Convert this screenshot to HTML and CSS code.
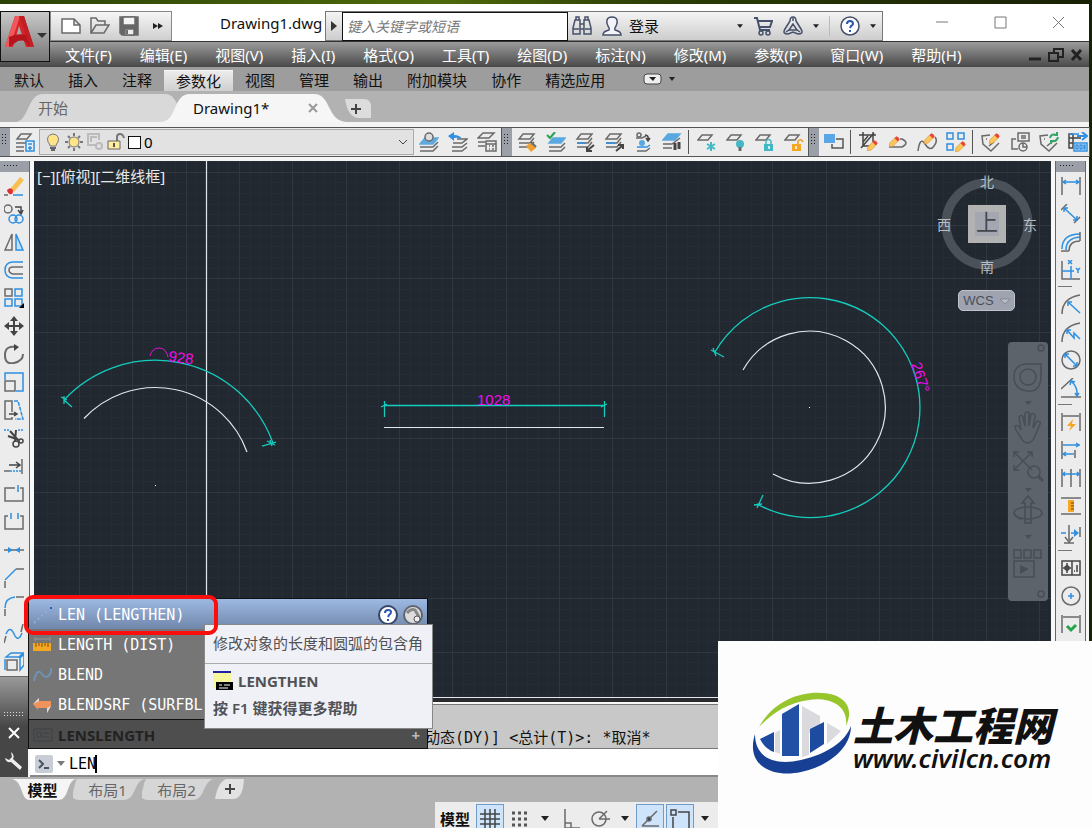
FILE: index.html
```html
<!DOCTYPE html>
<html lang="zh-CN">
<head>
  <meta charset="UTF-8">
  <meta name="viewport" content="width=device-width, initial-scale=1.0">
  <title>Drawing1.dwg</title>
  <link rel="stylesheet" href="styles.css">
</head>
<body>
  <!-- Shared icon parts -->
  <svg class="defs" width="0" height="0" aria-hidden="true">
    <symbol id="stack" viewBox="0 0 20 20"><path d="M6 2h11l-4 5H2zM2 11h11l4-5M2 15h11l4-5"/></symbol>
    <symbol id="sheet" viewBox="0 0 20 20"><path d="M5 3h10l-4 5H1z"/></symbol>
    <symbol id="pencil" viewBox="0 0 20 20"><path d="M2 18l1-6 8-8 5 5-8 8z" fill="#fbc65a" stroke="#d9963a" stroke-width="1"/><path d="M10 5l3-3q4 1 5 5l-3 3z" fill="#e8463c" stroke="none"/></symbol>
    <symbol id="caret" viewBox="0 0 8 5"><path d="M0 0h8L4 5z" fill="#222" stroke="none"/></symbol>
  </svg>

  <div class="window">
    <!-- Title bar -->
    <header class="titlebar">
      <button class="app-button" aria-label="应用程序菜单">
        <svg width="50" height="50" viewBox="0 0 50 50"><path d="M5 35L15 4h9l10 31h-8l-7-21-6 21z" fill="#d8232a"/><path d="M15 4l5 0L10 35H5z" fill="#f0585a"/><path d="M9 25q9 -5 21-1l3 9-5 1q-2-7-10-5l-9 6z" fill="#b5161e"/><path d="M24 4l10 31-5-3L19 4z" fill="#c01f26"/><path d="M37 21h10l-5 5z" fill="#333"/></svg>
      </button>
      <div class="quick-access">
        <button aria-label="新建"><svg class="ico" viewBox="0 0 20 20"><path d="M1 3h12l6 6v8H1zM13 3v6h6" fill="#fff"/></svg></button>
        <button aria-label="打开"><svg class="ico" viewBox="0 0 20 20"><path d="M1 17V2h5l2 3h7v4M1 17L6 9h13l-5 8z"/></svg></button>
        <button aria-label="保存"><svg class="ico" viewBox="0 0 20 20"><path d="M1 1h18v18H3l-2-2z" fill="#666"/><path d="M4 1h12v8H4z" fill="#f4f4f4"/><path d="M6 13h9v6H6z" fill="#eee"/><path d="M8 14v4" stroke-width="2"/></svg></button>
        <button aria-label="更多"><svg class="ico" viewBox="0 0 20 20"><path d="M5 7l5 3-5 3zM10 7l5 3-5 3z" fill="#222" stroke="none"/></svg></button>
      </div>
      <h1 class="doc-title">Drawing1.dwg</h1>
      <div class="info-center">
        <button class="info-arrow" aria-label="展开"><svg width="6" height="10"><path d="M0 0l6 5-6 5z" fill="#333"/></svg></button>
        <input class="search" type="text" placeholder="键入关键字或短语" aria-label="搜索">
        <button aria-label="查找"><svg class="ico navy" viewBox="0 0 20 20"><path d="M1 12L3 4h5v14H1zM12 4h5l2 8v6h-7zM8 8h4v5H8zM4 4V1h3v3M13 4V1h3v3M1 13h6M13 13h6"/></svg></button>
        <button class="sign-in"><svg class="ico navy" viewBox="0 0 20 20"><path d="M10 1c-6 0-6 5-4 9 1 2 2 2 1 4-3 1-6 1-6 5h18c0-4-3-4-6-5-1-2 0-2 1-4 2-4 2-9-4-9z" fill="#f4f4f8"/></svg>登录</button>
        <svg class="push" width="6" height="4"><use href="#caret"/></svg>
        <button aria-label="购物车"><svg class="ico navy" viewBox="0 0 20 20"><path d="M1 2h3l3 12h10M5 5h14l-2 6H6" stroke-width="2"/><circle cx="8" cy="17" r="2"/><circle cx="15" cy="17" r="2"/></svg></button>
        <button aria-label="应用中心"><svg class="ico navy" viewBox="0 0 20 20"><path d="M7 5q0-4 3-4t3 4l5 8q3 5-3 5l-5-2-5 2q-6 0-3-5zM10 8l-4 6h8z"/><path d="M10 2v3M3 16l3-2M17 16l-3-2"/></svg></button>
        <svg width="6" height="4"><use href="#caret"/></svg>
        <span class="info-sep"></span>
        <button aria-label="帮助"><svg class="ico navy" viewBox="0 0 20 20"><circle cx="10" cy="10" r="9" fill="#fff"/><path d="M7 8q0-3 3-3t3 3q0 1-2 2l-1 2M10 14v2" stroke="#2a55b0" stroke-width="2"/></svg></button>
        <svg width="6" height="4"><use href="#caret"/></svg>
      </div>
      <div class="window-controls">
        <button aria-label="最小化"><svg width="12" height="12"><path d="M0 6h12"/></svg></button>
        <button aria-label="最大化"><svg width="13" height="13"><path d="M1 1h11v11H1z"/></svg></button>
        <button aria-label="关闭"><svg width="13" height="13"><path d="M1 1l11 11M12 1L1 12"/></svg></button>
      </div>
    </header>

    <!-- Menu bar -->
    <nav class="menubar">
      <button>文件(F)</button>
      <button>编辑(E)</button>
      <button>视图(V)</button>
      <button>插入(I)</button>
      <button>格式(O)</button>
      <button>工具(T)</button>
      <button>绘图(D)</button>
      <button>标注(N)</button>
      <button>修改(M)</button>
      <button>参数(P)</button>
      <button>窗口(W)</button>
      <button>帮助(H)</button>
      <div class="doc-controls">
        <svg width="54" height="14" viewBox="0 0 54 14"><path d="M0 11h12" stroke="#222" stroke-width="3"/><path d="M20 5h9v8h-9zM25 5V1h9v8h-5" fill="none" stroke="#222" stroke-width="2"/><path d="M43 2l9 10M52 2l-9 10" stroke="#222" stroke-width="3"/></svg>
      </div>
    </nav>

    <!-- Ribbon tabs -->
    <nav class="ribbon">
      <button>默认</button>
      <button>插入</button>
      <button>注释</button>
      <button class="active">参数化</button>
      <button>视图</button>
      <button>管理</button>
      <button>输出</button>
      <button>附加模块</button>
      <button>协作</button>
      <button>精选应用</button>
      <svg class="ribbon-toggle" width="32" height="12" viewBox="0 0 32 12"><rect x="1" y="1" width="17" height="10" rx="3" fill="#eee" stroke="#444"/><path d="M6 4h7l-3 4zM26 4h6l-3 4z" fill="#222"/></svg>
    </nav>

    <!-- Drawing tabs -->
    <nav class="file-tabs">
      <button class="file-tab start">
        <svg class="tab-shape" width="175" height="29" viewBox="0 0 175 29"><path d="M0 29C14 29 12 1 28 1H150C166 1 162 29 175 29z" fill="#d9d9d9"/></svg>
        <span>开始</span>
      </button>
      <button class="file-tab current">
        <svg class="tab-shape" width="188" height="29" viewBox="0 0 188 29"><path d="M0 29C18 29 12 1 30 1H154C172 1 166 29 188 29z" fill="#f6f6f6"/></svg>
        <span>Drawing1*</span>
        <svg class="tab-close" width="10" height="10"><path d="M1 1l8 8M9 1L1 9" stroke="#999" stroke-width="2"/></svg>
      </button>
      <button class="add-tab" aria-label="新图形"><svg width="28" height="22" viewBox="0 0 28 22"><path d="M1 2h19q7 0 7 8v11H15Q4 21 1 2z" fill="#dcdcdc"/><path d="M7 12h10M12 7v10" stroke="#444" stroke-width="2"/></svg></button>
    </nav>

    <!-- Layer toolbars -->
    <div class="toolbars">
      <div class="toolbar">
        <span class="grip"></span>
        <button aria-label="图层特性"><svg class="ico" viewBox="0 0 20 20"><path d="M6 2h10l-4 5H2zM1 11h10M1 15h8M1 19h8"/><path class="b" d="M11 9h8v10h-8zM13 12h4M13 16h4M15 14v4"/></svg></button>
        <div class="layer-combo">
          <svg width="18" height="20" viewBox="0 0 18 20"><path d="M6 14q0-2-2-4-2-7 5-8 7 1 5 8-2 2-2 4z" fill="#ffe48a" stroke="#777"/><path d="M6 16h6M7 18h4" stroke="#666" stroke-width="2"/></svg>
          <svg width="18" height="20" viewBox="0 0 18 20"><circle cx="9" cy="10" r="5" fill="#ffe48a" stroke="#777"/><path d="M9 1v3M9 16v3M0 10h3M15 10h3M3 4l2 2M13 14l2 2M15 4l-2 2M5 14l-2 2" stroke="#777" stroke-width="2"/></svg>
          <svg width="18" height="20" viewBox="0 0 18 20"><path d="M10 13H2V2h11v6M5 10V5h6" stroke="#bbb" stroke-width="2" fill="none"/><circle cx="13" cy="14" r="3" fill="none" stroke="#bbb" stroke-width="2"/></svg>
          <svg width="18" height="20" viewBox="0 0 18 20"><path d="M10 9V5q0-3 3-3t4 4" fill="none" stroke="#777" stroke-width="2"/><path d="M1 9h12v8H1z" fill="#ffeda0" stroke="#666"/><path d="M7 11v4" stroke="#555" stroke-width="2"/></svg>
          <span class="swatch"></span>
          <select class="layer-select" aria-label="图层"><option>0</option></select>
          <svg width="10" height="6"><path d="M1 1l4 4 4-4" fill="none" stroke="#444"/></svg>
        </div>
        <button aria-label="置为当前"><svg class="ico" viewBox="0 0 20 20"><path d="M6 6h13l-5 6H1z" fill="#5fa9df" stroke="#5fa9df"/><circle cx="10" cy="5" r="4" fill="#ddd"/><path d="M1 15h13l5-5M1 19h13l5-5"/></svg></button>
        <button aria-label="上一个图层"><svg class="ico" viewBox="0 0 20 20"><path d="M9 7h10l-5 4H5M4 15h10l5-4M4 19h10l5-4"/><path d="M0 4l6-4v3q6 0 8 4-5-2-8-1v3z" fill="#2f8fe0" stroke="none"/></svg></button>
        <button aria-label="图层状态"><svg class="ico" viewBox="0 0 20 20"><path d="M6 1h11l-5 5H1zM1 10h7M1 14h7M9 9h10v10H9zM9 12h10M12 14h1M15 14h2M12 17h1M15 17h2"/></svg></button>
      </div>

      <div class="toolbar">
        <span class="grip"></span>
        <button aria-label="图层匹配"><svg class="ico" viewBox="0 0 20 20"><use href="#stack"/><path d="M9 14l4-3 6 5-5 4z" fill="#f0a030" stroke="none"/><path d="M14 10l5 5" stroke-width="2"/></svg></button>
        <button aria-label="更改为当前图层"><svg class="ico" viewBox="0 0 20 20"><path d="M7 6h12l-4 5H3z" fill="#5aa8e0" stroke="#5aa8e0"/><path d="M3 15h12l4-4M3 19h12l4-4"/><path d="M1 3l3 3 5-6" stroke="#27a34a" stroke-width="2"/></svg></button>
        <button aria-label="图层隔离"><svg class="ico" viewBox="0 0 20 20"><use href="#stack"/><path class="b" d="M2 11h9"/><path class="k" d="M19 13l-6 5M12 15v4h5" stroke-width="2"/></svg></button>
        <button aria-label="取消隔离"><svg class="ico" viewBox="0 0 20 20"><use href="#stack"/><path class="b" d="M2 11h9"/><path class="k" d="M12 19l6-5M14 13h5v4" stroke-width="2"/></svg></button>
        <button aria-label="复制到图层"><svg class="ico" viewBox="0 0 20 20"><path d="M3 6h6l4-2"/><circle cx="6" cy="3" r="2"/><path class="k" d="M12 3q4 0 3 5M13 6l2 3 2-3"/><circle cx="9" cy="11" r="3" fill="#5aa8e0" stroke="none"/><path d="M4 15h10l3-2" class="b"/><path d="M4 19h9l4-3"/></svg></button>
        <button aria-label="图层漫游"><svg class="ico" viewBox="0 0 20 20"><path d="M6 2h12l-5 6H1z" fill="#5aa8e0" stroke="#5aa8e0"/><path d="M1 12h9l8-6M1 16h9"/><path d="M13 11v7M17 10v7" stroke="#444" stroke-width="3"/></svg></button>
        <span class="sep"></span>
        <button aria-label="冻结"><svg class="ico" viewBox="0 0 20 20"><use href="#sheet"/><path class="t" d="M14 10v9M10 12l8 5M18 12l-8 5" stroke-width="2"/></svg></button>
        <button aria-label="关闭图层"><svg class="ico" viewBox="0 0 20 20"><use href="#sheet"/><circle cx="14" cy="12" r="4" fill="#43b8c4" stroke="none"/><path d="M14 15v4" stroke-width="3"/></svg></button>
        <button aria-label="锁定"><svg class="ico" viewBox="0 0 20 20"><use href="#sheet"/><path d="M11 12v-3q3-3 5 0v3" class="t"/><path d="M9 12h9v7H9z" fill="#43b8c4" stroke="none"/><path d="M14 14v3" stroke="#fff"/></svg></button>
        <button aria-label="解锁"><svg class="ico" viewBox="0 0 20 20"><use href="#sheet"/><path d="M14 12v-3q3-3 5 1" stroke="#ec9b1c"/><path d="M8 12h9v7H8z" fill="#f5a623" stroke="none"/><path d="M12 14v3" stroke="#fff"/></svg></button>
      </div>

      <div class="toolbar last">
        <span class="grip"></span>
        <button aria-label="绘图次序"><svg class="ico" viewBox="0 0 20 20"><path d="M0 2h11v9H0z" fill="#5aa6e6" stroke="none"/><path d="M12 7h7v9H8v-4" stroke="#555"/></svg></button>
        <span class="sep"></span>
        <button aria-label="编辑图案"><svg class="ico" viewBox="0 0 20 20"><path class="k" d="M4 0v14h10M0 3h17M14 0v10M15 1L2 16M9 4l-5 6"/><g transform="translate(7 7) scale(.65)"><use href="#pencil" width="20" height="20"/></g></svg></button>
        <button aria-label="编辑多段线"><svg class="ico" viewBox="0 0 20 20"><path d="M1 15h13q8-4 0-8h-2"/><g transform="translate(0 3) scale(.65)"><use href="#pencil" width="20" height="20"/></g></svg></button>
        <button aria-label="编辑样条曲线"><svg class="ico" viewBox="0 0 20 20"><path d="M1 19Q3 4 8 12t9 2q4-5 1-9"/><g transform="translate(6 0) scale(.65)"><use href="#pencil" width="20" height="20"/></g></svg></button>
        <button aria-label="编辑阵列"><svg class="ico" viewBox="0 0 20 20"><path class="b" d="M1 1h6v6H1zM12 1h6v6h-6zM1 12h6v6H1z"/><g transform="translate(8 8) scale(.65)"><use href="#pencil" width="20" height="20"/></g></svg></button>
        <span class="sep"></span>
        <button aria-label="编辑属性"><svg class="ico" viewBox="0 0 20 20"><path d="M9 3L1 4l1 8 8 7 8-8M5 7h1M8 14l5-4"/><g transform="translate(7 0) scale(.65)"><use href="#pencil" width="20" height="20"/></g></svg></button>
        <button aria-label="块属性"><svg class="ico" viewBox="0 0 20 20"><path d="M8 1h11v8H8zM11 4h5M11 6h5M6 7H2v10h6"/><circle cx="13" cy="15" r="4"/><path d="M13 11v4h4"/></svg></button>
        <button aria-label="同步属性"><svg class="ico" viewBox="0 0 20 20"><path d="M9 3L1 4l1 8 8 7 8-8M5 7h1M8 14l5-4"/><path d="M11 6q1-5 7-3M19 5q-1 5-7 4M18 0v3h-3M12 12V9h3" stroke="#35a565" stroke-width="2"/></svg></button>
        <button aria-label="提取数据"><svg class="ico" viewBox="0 0 20 20"><path d="M5 2H1v14h4M1 6h12M5 2v14M1 11h4" class="k"/><path d="M6 11h13v8H6z" fill="#fff" class="b"/><path d="M8 13h2v4H8zM12 13h2v4h-2zM16 13h1v4h-1zM1 2h10" class="b"/><path d="M9 4h8M14 0l5 4-5 4" class="b" stroke-width="2"/></svg></button>
      </div>
    </div>

    <main class="main">
      <div class="left-column">
        <!-- Modify toolbar -->
        <div class="side-toolbar left">
          <span class="grip-h"></span>
          <button aria-label="删除"><svg class="ico" viewBox="0 0 20 20"><path d="M0 19h4"/><path class="b" d="M9 19h10"/><path d="M7 12L16 1l4 3-10 12z" fill="#f8bf52" stroke="none"/><path d="M3 14q3-3 5-1 2 2 0 5-4 1-5-4z" fill="#e02f2f" stroke="none"/></svg></button>
          <button aria-label="复制"><svg class="ico" viewBox="0 0 20 20"><circle cx="4" cy="5" r="4"/><path class="k" d="M11 3h6v6M14 6l3 4 2-4"/><circle class="b" cx="9" cy="15" r="4"/><circle class="b" cx="15" cy="15" r="4"/></svg></button>
          <button aria-label="镜像"><svg class="ico" viewBox="0 0 20 20"><path d="M8 2v16H1z"/><path class="b" d="M12 2v16h7z" fill="#bfe0f8"/></svg></button>
          <button aria-label="偏移"><svg class="ico" viewBox="0 0 20 20"><path class="b" d="M19 2H8q-7 1-7 8t7 8h11"/><path d="M19 7H9q-4 0-4 3t4 4h10"/></svg></button>
          <button aria-label="阵列"><svg class="ico" viewBox="0 0 20 20"><path d="M1 1h7v7H1z"/><path class="b" d="M11 1h7v7h-7zM1 11h7v7H1zM11 11h7v7h-7z"/><path d="M20 15v5h-5z" fill="#000" stroke="none"/></svg></button>
          <button aria-label="移动"><svg class="ico" viewBox="0 0 20 20"><path class="k" d="M10 2v16M2 10h16" stroke-width="2"/><path d="M10 0l4 5H6zM10 20l4-5H6zM0 10l5-4v8zM20 10l-5-4v8z" fill="#444" stroke="none"/></svg></button>
          <button aria-label="旋转"><svg class="ico" viewBox="0 0 20 20"><path d="M13 3Q1 1 1 11t9 8 9-9" stroke-width="2"/><path d="M10 0l5 3-5 4z" fill="#444" stroke="none"/></svg></button>
          <button aria-label="缩放"><svg class="ico" viewBox="0 0 20 20"><path class="b" d="M1 8V1h18v18h-7"/><path d="M1 9h10v10H1z"/></svg></button>
          <button aria-label="拉伸"><svg class="ico" viewBox="0 0 20 20"><path d="M8 12V1H1v18h7v-2"/><path class="b" d="M10 1h4l5 18h-8" stroke-dasharray="4 1"/><path class="k" d="M5 14h8M10 12l3 2-3 2"/></svg></button>
          <button aria-label="修剪"><svg class="ico" viewBox="0 0 20 20"><path class="b" d="M0 2h5M14 2h6" stroke-dasharray="2 1"/><path class="k" d="M6 3l8 9M12 2l-1 11M4 8l11 4" stroke-width="2"/><circle class="k" cx="12" cy="16" r="3"/><circle class="k" cx="17" cy="13" r="2"/></svg></button>
          <button aria-label="延伸"><svg class="ico" viewBox="0 0 20 20"><path d="M18 3v15M0 15h6"/><path class="b" d="M6 15h11" stroke-dasharray="2 1"/><path class="k" d="M5 9h10M12 6l4 3-4 3"/></svg></button>
          <button aria-label="打断于点"><svg class="ico" viewBox="0 0 20 20"><path d="M11 4H1v13h18V4h-3"/><path class="b" d="M14 1v7"/></svg></button>
          <button aria-label="打断"><svg class="ico" viewBox="0 0 20 20"><path d="M4 4H1v13h18V4h-3"/><path class="b" d="M7 1v6M14 1v6"/></svg></button>
          <button aria-label="合并"><svg class="ico" viewBox="0 0 20 20"><path d="M0 10h20"/><path d="M4 7l5 3-5 3zM16 7l-5 3 5 3z" fill="#2f8fe0" stroke="none"/></svg></button>
          <button aria-label="倒角"><svg class="ico" viewBox="0 0 20 20"><path d="M1 20v-7M12 1h8"/><path class="b" d="M1 12L12 1"/></svg></button>
          <button aria-label="圆角"><svg class="ico" viewBox="0 0 20 20"><path d="M1 20v-7M12 1h8"/><path class="b" d="M1 12Q1 2 11 1"/></svg></button>
          <button aria-label="光顺曲线"><svg class="ico" viewBox="0 0 20 20"><path d="M0 19l2-7M17 8l2-8"/><path class="b" d="M2 10q4-9 8 0t8-1"/></svg></button>
          <button aria-label="分解"><svg class="ico" viewBox="0 0 20 20"><path d="M3 8h10v10H3z"/><path class="b" d="M1 7v11M2 5l5-4h12l-4 4zM16 6l4-4v11l-4 5z"/></svg></button>
        </div>
        <div class="command-side">
          <span class="side-dots"></span>
          <button aria-label="关闭命令行"><svg width="12" height="12"><path d="M1 1l10 10M11 1L1 11" stroke="#fff" stroke-width="2"/></svg></button>
          <button aria-label="自定义"><svg width="18" height="18" viewBox="0 0 18 18"><path d="M6 0q4 3 2 7l9 8-2 3-9-8q-5 1-6-4l4 2 3-3z" fill="#eee"/></svg></button>
        </div>
      </div>

      <div class="center-column">
        <div class="workspace">
          <div class="viewport">
            <!-- coordinates inside the group are window coordinates -->
            <svg class="drawing" width="100%" height="100%">
              <defs>
                <pattern id="grid" x="45" y="64" width="160" height="160" patternUnits="userSpaceOnUse">
                  <path d="M11 0v160M21 0v160M32 0v160M43 0v160M64 0v160M75 0v160M85 0v160M96 0v160M117 0v160M128 0v160M139 0v160M149 0v160M0 11h160M0 21h160M0 32h160M0 43h160M0 64h160M0 75h160M0 85h160M0 96h160M0 117h160M0 128h160M0 139h160M0 149h160" class="minor" transform="translate(.5 .5)"/>
                  <path d="M0 0v160M53 0v160M107 0v160M0 0h160M0 53h160M0 107h160" class="major" transform="translate(.5 .5)"/>
                </pattern>
              </defs>
              <rect width="100%" height="100%" fill="#212830"/>
              <rect width="100%" height="100%" fill="url(#grid)"/>
              <g transform="translate(-34 -161)">
                <path class="white" d="M206.500 161V697.500M34 697.500H1051"/>
                <rect x="34" y="699" width="1017" height="3" fill="#2b2b2e"/>

                <!-- arc length dimension -->
                <path class="white" d="M84 418.500A97.500 97.500 0 0 1 247 452"/>
                <path class="cyan" d="M64 400A125 125 0 0 1 273 443M64 400l8 7M64 396v8M61 397l6 3M262 446l14-4M267 441l8 4M270 440l2 6"/>
                <path class="magenta" d="M150 356q2-8 9-8t9 9"/>
                <text x="168" y="361" transform="rotate(8 168 361)" class="dim">928</text>
                <rect x="155" y="485" width="1" height="1" fill="#fff"/>

                <!-- linear dimension -->
                <path class="white" d="M384 427.500H604"/>
                <path class="cyan" d="M384 405.500H604M384.500 401v16M604.500 401v16M381 407l6-3M601 407l6-3"/>
                <text x="477" y="405" class="dim">1028</text>

                <!-- angular dimension -->
                <path class="white" d="M743 370A76 76 0 1 1 773 474"/>
                <path class="cyan" d="M715 352A110 110 0 1 1 757 504M711 350l13 7M713 348l3 8M763 495l-6 13M754 505l8-1"/>
                <text x="911" y="364" transform="rotate(73 911 364)" class="dim">267°</text>
                <rect x="809" y="407" width="1" height="1" fill="#fff"/>
              </g>
            </svg>
            <div class="view-label">[−][俯视][二维线框]</div>

            <div class="viewcube">
              <svg width="106" height="106" viewBox="0 0 106 106">
                <circle cx="53" cy="53" r="41" fill="none" stroke="#4b5159" stroke-width="9"/>
                <rect x="34" y="34" width="38" height="38" fill="#b2b2b3"/>
                <rect x="41" y="41" width="24" height="24" fill="#a4a7b0"/>
              </svg>
              <span class="north">北</span>
              <span class="west">西</span>
              <span class="top">上</span>
              <span class="east">东</span>
              <span class="south">南</span>
            </div>
            <button class="wcs">WCS <svg width="10" height="6"><path d="M0 1h10L5 6z" fill="#b9bcc6" stroke="#858a97"/></svg></button>

            <div class="navbar">
              <svg width="40" height="259" viewBox="0 0 40 259">
                <g fill="none" stroke="#484e56" stroke-width="1.5">
                  <circle cx="33" cy="6" r="3"/><path d="M33 22H18Q6 23 6 35t13 14 14-14z"/><circle cx="20" cy="35" r="8"/>
                  <path d="M12 94q-6-8-5-10 3-2 6 4l-2-13q2-3 4 0l2 9V71q3-2 4 0v13l2-12q4-1 4 2l-2 12 4-7q4 0 3 3l-5 12q-2 6-7 7-5 0-8-7z"/>
                  <path d="M6 110l18 18M24 110L6 128M6 115v-5h5M19 110h5v5M6 123v5h5"/><circle cx="26" cy="130" r="6"/><path d="M30 134l5 5" stroke-width="3"/>
                  <ellipse cx="20" cy="171" rx="14" ry="6"/><path d="M17 181v-20l-3 0 6-7 6 7h-3v20zM6 172l7 6"/>
                  <path d="M6 208h7v8H6zM16 208h7v8h-7zM26 208h7v8h-7zM6 219h20v16H6z"/><circle cx="33" cy="252" r="3"/>
                </g>
                <path d="M17 59h7l-4 4zM17 146h7l-4 4zM17 193h7l-4 4zM12 223l9 4-9 5z" fill="#484e56"/>
              </svg>
            </div>
          </div>

          <!-- Dimension toolbar -->
          <div class="side-toolbar right">
            <span class="grip-h"></span>
            <button aria-label="线性"><svg class="ico" viewBox="0 0 20 20"><path d="M1 1v18M19 1v18"/><path class="b" d="M2 6h16M5 4L2 6l3 2M15 4l3 2-3 2"/></svg></button>
            <button aria-label="对齐"><svg class="ico" viewBox="0 0 20 20"><path d="M0 6l6-6M13 19l6-6"/><path class="b" d="M3 4l13 12M3 8V4h4M16 12v4h-4"/></svg></button>
            <button aria-label="弧长"><svg class="ico" viewBox="0 0 20 20"><path class="b" d="M1 17Q1 2 19 2M5 18Q5 6 19 5"/><path d="M8 19Q8 9 19 9M0 19h8M19 0v9"/></svg></button>
            <button aria-label="坐标"><svg class="ico" viewBox="0 0 20 20"><path d="M1 1v18h18"/><path class="b" d="M1 11h12M10 6v13M7 0l4 4M11 0L7 4M15 8l2 2 2-2M17 10v3"/></svg></button>
            <span class="sep-h"></span>
            <button aria-label="半径"><svg class="ico" viewBox="0 0 20 20"><path d="M1 20Q1 4 19 1"/><path class="b" d="M19 19L7 8M7 12V8h4"/></svg></button>
            <button aria-label="折弯"><svg class="ico" viewBox="0 0 20 20"><path d="M1 20Q1 4 19 1"/><path class="b" d="M19 17l-6-6v5L6 8M6 12V8h4"/></svg></button>
            <button aria-label="直径"><svg class="ico" viewBox="0 0 20 20"><circle cx="10" cy="10" r="9"/><path class="b" d="M4 4l12 12M4 8V4h4M16 12v4h-4"/></svg></button>
            <button aria-label="角度"><svg class="ico" viewBox="0 0 20 20"><path d="M0 19h20M0 11L12 0"/><path class="b" d="M10 3q7 6 6 15M9 7l1-4 4 1M14 15l2 3 2-3"/></svg></button>
            <span class="sep-h"></span>
            <button aria-label="快速标注"><svg class="ico" viewBox="0 0 20 20"><path d="M1 1v18M19 1v18M2 4h16"/><path d="M12 7l-6 7h4l-2 5 7-7h-4z" fill="#f5a623" stroke="none"/></svg></button>
            <button aria-label="基线"><svg class="ico" viewBox="0 0 20 20"><path d="M1 1v18M14 10v8"/><path class="b" d="M2 5h17M15 3l3 2-3 2M2 14h11M5 12l-3 2 3 2"/></svg></button>
            <button aria-label="连续"><svg class="ico" viewBox="0 0 20 20"><path d="M1 1v18M10 1v18M19 1v18"/><path class="b" d="M1 6h18M4 4L2 6l2 2M16 4l2 2-2 2"/></svg></button>
            <button aria-label="等距标注"><svg class="ico" viewBox="0 0 20 20"><path d="M0 2h20M0 18h20"/><path d="M7 4h6v12H7z" fill="#f5a623" stroke="none"/><path d="M10 7h3M10 10h3M10 13h3" stroke="#9a6508"/></svg></button>
            <button aria-label="折断标注"><svg class="ico" viewBox="0 0 20 20"><path d="M8 1v15M4 13l4 5 4-5M3 19h10M19 3v10"/><path class="b" d="M0 9h5M10 9h6"/><path d="M13 5l5 4-5 4z" fill="#2f8fe0" stroke="none"/></svg></button>
            <span class="sep-h"></span>
            <button aria-label="公差"><svg class="ico" viewBox="0 0 20 20"><path class="k" d="M1 3h18v14H1zM11 3v14M6 5v10M2 10h8M16 7v7M13 13h1"/><circle class="k" cx="6" cy="10" r="2"/></svg></button>
            <button aria-label="圆心标记"><svg class="ico" viewBox="0 0 20 20"><circle cx="10" cy="10" r="9"/><path class="b" d="M7 10h6M10 7v6"/></svg></button>
            <button aria-label="检验"><svg class="ico" viewBox="0 0 20 20"><path d="M1 1v18M19 1v18M2 3h16"/><path d="M6 12l4 4 5-5" stroke="#27a34a" stroke-width="3"/></svg></button>
          </div>
        </div>

        <!-- Command line -->
        <div class="history">动态(DY)] &lt;总计(T)&gt;: *取消*</div>
        <div class="command-line">
          <svg width="18" height="18"><rect width="18" height="18" rx="2" fill="#c9ced6"/><path d="M4 5l4 4-4 4M9 13h5" fill="none" stroke="#4a5366" stroke-width="2"/></svg>
          <svg class="cmd-caret" width="8" height="5"><use href="#caret"/></svg>
          <label class="cmd-field"><input type="text" value="LEN" aria-label="命令"><span class="text-caret"></span></label>
        </div>

        <div class="suggestions">
          <button class="suggestion selected">
            <svg width="20" height="20" viewBox="0 0 20 20"><path d="M1 18L14 6" stroke="#86b0dd" stroke-width="2" stroke-dasharray="2 3"/><path d="M17 2h2v2h-2z" fill="#1e62b8"/></svg>
            LEN (LENGTHEN)
            <svg class="tool-icons" width="46" height="22" viewBox="0 0 46 22"><circle cx="11" cy="11" r="9" fill="#fff" stroke="#344668" stroke-width="2"/><path d="M8 9q0-3 3-3t3 2q0 2-2 3l-1 2M11 15v2" fill="none" stroke="#2a55b0" stroke-width="2"/><circle cx="36" cy="11" r="9" fill="#ddd" stroke="#5f6570" stroke-width="2"/><path d="M30 9q4-5 8-3l4 7" fill="none" stroke="#888" stroke-width="3"/><circle cx="40" cy="15" r="3" fill="#eee" stroke="#555"/></svg>
          </button>
          <button class="suggestion">
            <svg width="20" height="20" viewBox="0 0 20 20"><path d="M2 4h15M2 2v4M17 2v4" stroke="#999"/><path d="M0 8h18v8H0z" fill="#f5a623"/><path d="M3 8v4M6 8v3M9 8v4M12 8v3M15 8v4" stroke="#7a5010"/></svg>
            LENGTH (DIST)
          </button>
          <button class="suggestion">
            <svg width="20" height="20" viewBox="0 0 20 20"><path d="M1 16Q4 2 9 9t9-2V3" fill="none" stroke="#6e93b5" stroke-width="2"/></svg>
            BLEND
          </button>
          <button class="suggestion">
            <svg width="20" height="20" viewBox="0 0 20 20"><path d="M0 9l6-6v3h12v5l-4 7v-5H5v2z" fill="#f0935a"/><path d="M0 9l6-6v3M18 11l-4 7v-5" fill="#ddd"/></svg>
            BLENDSRF (SURFBL
          </button>
          <button class="suggestion sysvar">
            <svg width="20" height="20" viewBox="0 0 20 20"><path d="M1 4h18v12H1zM4 7h4v5H4zM10 8h6M10 12h6" fill="none" stroke="#3c4248"/></svg>
            LENSLENGTH
            <span class="expand">+</span>
          </button>
        </div>

        <div class="tooltip">
          <p class="tip-text">修改对象的长度和圆弧的包含角</p>
          <p class="tip-name"><svg width="20" height="20"><path d="M0 2h18v15H0z" fill="#f6f69a"/><path d="M0 1h18" stroke="#2222a0" stroke-width="2"/><path d="M3 11h17v8H3z" fill="#000"/><path d="M6 14h3M11 14h6M6 17h9" stroke="#fff"/></svg>LENGTHEN</p>
          <p class="tip-help">按 F1 键获得更多帮助</p>
        </div>
        <div class="highlight-box"></div>
      </div>
    </main>

    <!-- Layout tabs and status bar -->
    <footer class="footer">
      <div class="layout-tabs">
        <button class="layout-tab active"><svg class="tab-shape" width="64" height="21" viewBox="0 0 64 21"><path d="M0 0h64C54 2 58 21 46 21H18C8 21 12 3 0 0z" fill="#f5f5f5"/></svg><span>模型</span></button>
        <button class="layout-tab"><svg class="tab-shape" width="72" height="21" viewBox="0 0 72 21"><path d="M4 0h68C60 2 64 21 50 21H6Q0 21 -2 16C2 12 1 4 4 0z" fill="#d6d6d6"/></svg><span>布局1</span></button>
        <button class="layout-tab"><svg class="tab-shape" width="72" height="21" viewBox="0 0 72 21"><path d="M4 0h68C60 2 64 21 50 21H6Q0 21 -2 16C2 12 1 4 4 0z" fill="#d6d6d6"/></svg><span>布局2</span></button>
        <button class="add-layout" aria-label="新建布局"><svg width="29" height="21" viewBox="0 0 29 21"><path d="M11 0h18q-1 20-11 20H0Q3 3 11 0z" fill="#e2e2e2"/><path d="M10 10h10M15 5v10" stroke="#444" stroke-width="2"/></svg></button>
      </div>
      <div class="status-bar">
        <button class="model-space">模型</button>
        <button class="on" aria-label="栅格"><svg class="ico" viewBox="0 0 20 20"><path class="k" d="M5 0v20M10 0v20M15 0v20M0 5h20M0 10h20M0 15h20"/></svg></button>
        <button aria-label="捕捉"><svg class="ico" viewBox="0 0 20 20"><path d="M2 4h17M2 10h17M2 16h17" stroke="#555" stroke-width="3" stroke-dasharray="3 3"/></svg></button>
        <button class="drop" aria-label="捕捉选项"><svg width="8" height="5"><use href="#caret"/></svg></button>
        <button aria-label="正交"><svg class="ico" viewBox="0 0 20 20"><path d="M5 0v19h15M5 14h6v5"/></svg></button>
        <button aria-label="极轴"><svg class="ico" viewBox="0 0 20 20"><circle cx="9" cy="10" r="7"/><path d="M9 10h11M9 10l8-8"/></svg></button>
        <button class="drop" aria-label="极轴选项"><svg width="8" height="5"><use href="#caret"/></svg></button>
        <button class="on" aria-label="对象捕捉追踪"><svg class="ico" viewBox="0 0 20 20"><path d="M2 17h17M2 17L17 2"/><circle cx="9" cy="10" r="2" fill="#345"/></svg></button>
        <button class="on" aria-label="对象捕捉"><svg class="ico" viewBox="0 0 20 20"><path class="k" d="M1 1h5v5H1zM8 3h11v17M3 8v12"/></svg></button>
        <button class="drop" aria-label="对象捕捉选项"><svg width="8" height="5"><use href="#caret"/></svg></button>
      </div>
    </footer>
  </div>

  <!-- Site mark -->
  <aside class="site-mark">
    <svg width="102" height="84" viewBox="0 0 102 84">
      <path d="M8 35C25 4 60-4 83 3c16 6 18 18 12 31C98 12 76 5 58 8 36 11 20 22 8 35z" fill="#97c52c"/>
      <path d="M4 42C4 66 24 74 50 68 76 62 94 50 100 34 100 56 78 74 50 80 22 86-6 74 4 42z" fill="#173f93"/>
      <path d="M51 14l18 10v12l-11 5v22l-7 2zM76 31l14 8-14 13z" fill="#d9d9de"/>
      <path d="M31 22l17-10v52H31z" fill="#2150a4"/>
      <path d="M9 47l14-7v20Q14 57 9 47zM59 37l14-7v22l-14 9z" fill="#1d4ba0"/>
      <path d="M24 41l5-3v24l-5-2z" fill="#d9d9de"/>
    </svg>
    <div class="mark-text">
      <strong>土木工程网</strong>
      <a href="#">www.civilcn.com</a>
    </div>
  </aside>
</body>
</html>
```

FILE: styles.css
```css
* {
  margin: 0;
  padding: 0;
  box-sizing: border-box;
}

body {
  height: 100vh;
  overflow: hidden;
  position: relative;
  background: linear-gradient(90deg, #2c4208, #4f6a0a 40%, #2c3d05 60%, #182005);
  font-family: "Noto Sans", "Noto Sans CJK SC", sans-serif;
  font-size: 15px;
  line-height: 20px;
  color: #111;
}

button {
  border: none;
  background: none;
  font: inherit;
  color: inherit;
  display: flex;
  align-items: center;
  justify-content: center;
  white-space: nowrap;
  flex: none;
}

svg {
  flex: none;
  display: block;
}

.defs {
  position: absolute;
}

.window {
  position: relative;
  height: 100vh;
  padding-top: 4px;
  margin-right: 3px;
  display: flex;
  flex-direction: column;
}

/* Icons */
.ico {
  width: 20px;
  height: 20px;
  fill: none;
  stroke: #6a6a6a;
  stroke-width: 1.5;
}

.ico .b { stroke: #2f8fe0; }
.ico .k { stroke: #444; }
.ico .t { stroke: #43b8c4; }
.ico.navy { stroke: #46506b; }

/* Title bar */
.titlebar {
  flex: none;
  height: 37px;
  padding: 7px 0 0 50px;
  display: flex;
  background: #fff;
}

.app-button {
  position: absolute;
  left: 0;
  top: 11px;
  width: 50px;
  height: 51px;
  z-index: 2;
  border: 1px solid #111;
  background: linear-gradient(#c9c9c9, #777);
}

.quick-access {
  width: 122px;
  height: 30px;
  display: flex;
  align-items: center;
  padding-left: 5px;
  background: linear-gradient(#f6f6f6, #cfcfcf);
  border: 1px solid #888;
}

.quick-access button {
  width: 29px;
}

.doc-title {
  flex: 1;
  padding-left: 48px;
  font-size: 15px;
  font-weight: 400;
  line-height: 24px;
  overflow: hidden;
  white-space: nowrap;
}

.info-center {
  width: 558px;
  height: 30px;
  display: flex;
  align-items: center;
  gap: 10px;
  padding-right: 6px;
  background: linear-gradient(#f4f4f4, #cdcdcd);
  border: 1px solid #777;
}

.info-arrow {
  width: 16px;
  margin-right: -10px;
}

.search {
  width: 226px;
  height: 29px;
  margin-right: -6px;
  padding: 0 4px;
  border: 1px solid #111;
  font: italic 14px/20px "Noto Sans", "Noto Sans CJK SC", sans-serif;
  background: #fff;
}

.search::placeholder {
  color: #777;
  opacity: 1;
}

.sign-in {
  gap: 7px;
}

.push {
  margin-left: auto;
}

.info-sep {
  width: 1px;
  height: 20px;
  background: #bbb;
}

.window-controls {
  width: 176px;
  margin-left: 30px;
  display: flex;
}

.window-controls button {
  width: 58px;
  height: 22px;
}

.window-controls svg {
  fill: none;
  stroke: #777;
}

/* Menu bar */
.menubar {
  flex: none;
  height: 26px;
  padding-left: 65px;
  display: flex;
  align-items: center;
  gap: 28px;
  background: linear-gradient(#9c9c9c, #484848);
  border-top: 1px solid #333;
  color: #fff;
}

.doc-controls {
  margin-left: auto;
  padding-right: 6px;
}

/* Ribbon tabs */
.ribbon {
  flex: none;
  height: 24px;
  padding: 3px 0 0 2px;
  display: flex;
  background: #9d9d9d;
}

.ribbon button {
  padding: 0 12px;
  height: 20px;
}

.ribbon .active {
  height: 21px;
  background: linear-gradient(#ececec, #cfcfcf);
  border-top: 1px solid #f8f8f8;
}

.ribbon-toggle {
  margin: 3px 0 0 26px;
}

/* Drawing tabs */
.file-tabs {
  flex: none;
  height: 31px;
  padding: 2px 0 0 15px;
  display: flex;
  background: #b2b2b2;
}

.file-tab {
  position: relative;
  height: 29px;
  justify-content: flex-start;
}

.tab-shape {
  position: absolute;
  left: 0;
  top: 0;
}

.file-tab span,
.layout-tab span {
  position: relative;
}

.start {
  width: 145px;
  padding-left: 23px;
  color: #666;
}

.current {
  width: 184px;
  padding-left: 33px;
}

.tab-close {
  position: relative;
  margin-left: 39px;
}

.add-tab {
  height: 29px;
}

/* Toolbars */
.toolbars {
  flex: none;
  height: 39px;
  padding: 5px 0;
  display: flex;
  gap: 1px;
  background: #f4f4f4;
}

.toolbar {
  flex: none;
  height: 30px;
  display: flex;
  align-items: center;
  background: #ececec;
  border: solid #555;
  border-width: 1px 0;
  box-shadow: 1px 0 #555;
}

.toolbar button {
  width: 29px;
  height: 28px;
}

.toolbar.last {
  flex: 1;
  min-width: 0;
  overflow: hidden;
}

.grip {
  flex: none;
  width: 10px;
  height: 28px;
  background: radial-gradient(circle, #222 1px, transparent 1px) 2px 4px / 3px 3px content-box, #9b9fa8;
  padding: 4px 2px 10px;
  background-clip: content-box, border-box;
}

.sep {
  flex: none;
  width: 6px;
  height: 24px;
  border-left: 1px solid #555;
  margin-left: 2px;
  margin-right: -2px;
}

.layer-combo {
  width: 375px;
  height: 26px;
  padding: 0 5px 0 4px;
  display: flex;
  align-items: center;
  gap: 3px;
  background: #e2e2e2;
  border: 1px solid #aaa;
}

.swatch {
  width: 13px;
  height: 13px;
  background: #fff;
  border: 1px solid #111;
}

.layer-select {
  flex: 1;
  appearance: none;
  border: none;
  background: none;
  font: inherit;
}

/* Main area */
.main {
  flex: 1;
  min-height: 0;
  display: flex;
  background: #f8f8f8;
}

.left-column {
  flex: none;
  width: 30px;
  display: flex;
  flex-direction: column;
}

.side-toolbar {
  flex: none;
  display: flex;
  flex-direction: column;
  background: #ececec;
  border: 1px solid #666;
  border-top: none;
}

.side-toolbar.left {
  border-left: none;
}

.side-toolbar button {
  height: 28px;
}

.left button {
  padding-right: 2px;
}

.grip-h {
  flex: none;
  height: 11px;
  padding: 3px 12px 4px 3px;
  background: radial-gradient(circle, #222 1px, transparent 1px) 0 0 / 3px 3px content-box, #9b9fa8;
  background-clip: content-box, border-box;
}

.sep-h {
  flex: none;
  width: 14px;
  height: 6px;
  margin-left: 2px;
  border-top: 1px solid #777;
  margin-top: 2px;
  margin-bottom: -2px;
}

.command-side {
  flex: 1;
  width: 28px;
  display: flex;
  flex-direction: column;
  align-items: center;
  gap: 13px;
  padding-top: 34px;
  background: linear-gradient(#9a9a9a, #464646 50%);
}

.side-dots {
  width: 22px;
  height: 6px;
  margin-bottom: -3px;
  background: radial-gradient(circle, #ddd 1px, transparent 1px) 0 0 / 3px 3px;
}

.center-column {
  position: relative;
  flex: 1;
  min-width: 0;
  display: flex;
  flex-direction: column;
}

.workspace {
  flex: 1;
  min-height: 0;
  display: flex;
  gap: 4px;
  padding: 0 3px 0 4px;
  overflow: hidden;
}

.right {
  width: 31px;
}

.viewport {
  position: relative;
  flex: 1;
  overflow: hidden;
}

.minor { stroke: #252c35; fill: none; }
.major { stroke: #303740; fill: none; }
.white { stroke: #e4e6ee; fill: none; stroke-width: 1.2; }
.cyan { stroke: #14cdbf; fill: none; stroke-width: 1.3; }
.magenta { stroke: #e010d8; fill: none; }

.dim {
  font: 15px "Liberation Sans", Arial, sans-serif;
  fill: #f00cf0;
}

.view-label {
  position: absolute;
  left: 3px;
  top: 5px;
  color: #e8e8e8;
}

.viewcube {
  position: absolute;
  right: 11px;
  top: 10px;
  width: 106px;
  height: 106px;
  color: #b9bdc2;
  font-size: 14px;
}

.viewcube span {
  position: absolute;
}

.viewcube .north { left: 46px; top: 1px; }
.viewcube .south { left: 46px; top: 86px; }
.viewcube .west { left: 3px; top: 44px; }
.viewcube .east { left: 89px; top: 44px; }
.viewcube .top {
  left: 42px;
  top: 41px;
  font-family: "Liberation Serif", "Noto Sans CJK SC", serif;
  font-size: 22px;
  line-height: 22px;
  color: #44474e;
}

.wcs {
  position: absolute;
  right: 36px;
  top: 129px;
  width: 57px;
  height: 21px;
  gap: 6px;
  border: 1px solid #c0c3cc;
  border-radius: 5px;
  background: #9fa3b0;
  color: #4b4f59;
  font: 13px "Liberation Sans", Arial, sans-serif;
}

.navbar {
  position: absolute;
  right: 3px;
  top: 181px;
  width: 40px;
  height: 259px;
  border-radius: 4px;
  background: #5d636b;
}

/* Command line */
.history,
.command-line {
  font-family: "DejaVu Sans Mono", "Noto Sans CJK SC", monospace;
}

.history {
  flex: none;
  height: 45px;
  margin-top: 2px;
  padding: 23px 0 0 395px;
  border: solid #777;
  border-width: 1px 0;
  background: #c8c8c8;
  white-space: nowrap;
}

.command-line {
  flex: none;
  height: 28px;
  padding: 3px 0 0 5px;
  display: flex;
  align-items: center;
  background: #fff;
  border-bottom: 2px solid #888;
}

.cmd-caret {
  margin: 0 4px;
  opacity: 0.6;
}

.cmd-field {
  position: relative;
  flex: 1;
}

.cmd-field input {
  width: 100%;
  border: none;
  outline: none;
  background: none;
  font: inherit;
}

.text-caret {
  position: absolute;
  left: 26px;
  top: 1px;
  width: 2px;
  height: 18px;
  background: #000;
}

.suggestions {
  position: absolute;
  left: -2px;
  bottom: 28px;
  width: 400px;
  border: 1px solid #111;
  background: #767676;
  color: #fff;
  font-family: "DejaVu Sans Mono", monospace;
}

.suggestion {
  position: relative;
  width: 100%;
  height: 30px;
  padding: 2px 0 0 4px;
  gap: 5px;
  justify-content: flex-start;
}

.selected {
  background: linear-gradient(#9db9e2, #7187ab);
}

.tool-icons {
  margin-left: auto;
  margin-right: 4px;
}

.sysvar {
  height: 29px;
  background: #4e4e4e;
  border-top: 1px solid #111;
  color: #222;
  font-family: "Noto Sans", sans-serif;
  font-weight: 700;
}

.expand {
  margin-left: auto;
  margin-right: 7px;
  color: #bbb;
}

.tooltip {
  position: absolute;
  left: 174px;
  bottom: 48px;
  width: 229px;
  height: 105px;
  background: #f0f1f7;
  border: 1px solid #888;
  color: #505256;
}

.tooltip p {
  padding: 0 8px;
  white-space: nowrap;
}

.tooltip .tip-text {
  padding-top: 8px;
  height: 39px;
  border-bottom: 1px solid #aaa;
}

.tooltip .tip-name {
  display: flex;
  align-items: center;
  gap: 5px;
  height: 34px;
  font-weight: 700;
}

.tip-help {
  padding-top: 2px;
  font-weight: 600;
}

.highlight-box {
  position: absolute;
  left: -6px;
  bottom: 142px;
  width: 194px;
  height: 40px;
  border: 4px solid #fa0f0c;
  border-radius: 9px;
}

/* Footer */
.footer {
  flex: none;
  height: 51px;
  display: flex;
  background: #b2b2b2;
}

.layout-tabs {
  width: 435px;
  padding: 2px 0 0 12px;
  display: flex;
}

.layout-tab {
  position: relative;
  width: 69px;
  height: 21px;
  color: #666;
}

.layout-tab.active {
  width: 61px;
  color: #111;
  font-weight: 600;
}

.add-layout {
  height: 21px;
  margin-left: 4px;
}

.status-bar {
  flex: 1;
  height: 26px;
  margin-top: 25px;
  display: flex;
  background: #ececec;
}

.status-bar button {
  width: 28px;
  height: 30px;
  margin: 2px 1px 0;
}

.status-bar .model-space {
  width: 38px;
  font-weight: 600;
}

.status-bar .drop {
  width: 18px;
  height: 28px;
}

.status-bar .on {
  background: #cde4fa;
  border: 1px solid #6f9ccb;
}

/* Site mark */
.site-mark {
  position: absolute;
  right: 0;
  bottom: 0;
  z-index: 3;
  width: 374px;
  height: 187px;
  padding: 51px 0 0 33px;
  display: flex;
  background: #fdfdfd;
}

.mark-text {
  display: flex;
  flex-direction: column;
  padding-top: 14px;
  color: #111;
  font-style: italic;
  white-space: nowrap;
}

.mark-text strong {
  font-size: 40px;
  line-height: 40px;
  font-weight: 900;
}

.mark-text a {
  color: inherit;
  text-decoration: none;
  font-size: 26px;
  line-height: 24px;
  font-weight: 600;
}
```
